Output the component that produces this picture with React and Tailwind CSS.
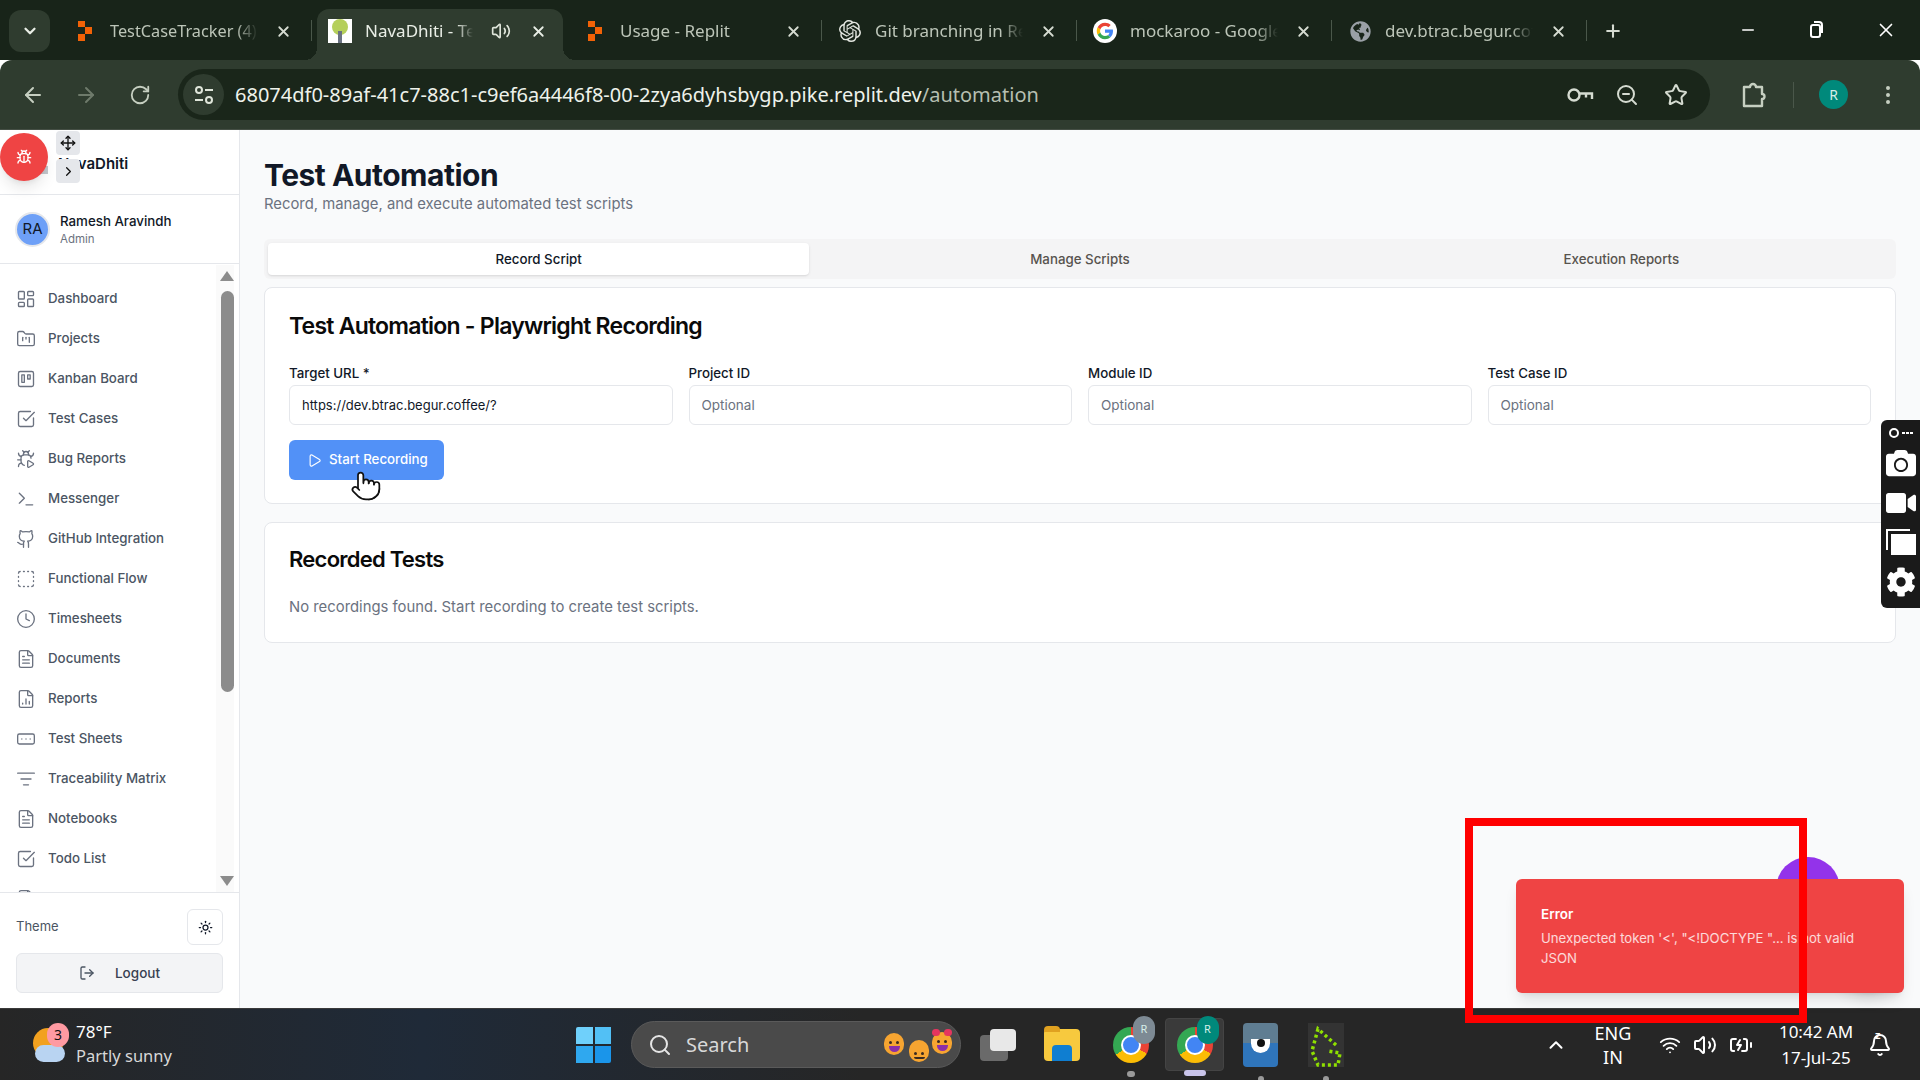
import {
  ArrowLeft, ArrowRight, RotateCw, ZoomOut, Star, EllipsisVertical,
  X, Plus, Minus, ChevronDown, ChevronUp, ChevronRight, Volume2, Move, Bug, BugPlay, LayoutDashboard, FolderKanban,
  Trello, SquareCheckBig, Terminal, Github, SquareDashed, Clock, FileText, FileChartColumn,
  RectangleEllipsis, ListFilter, Sun, LogOut, Play, Search, Wifi, Bell, Pointer, BatteryCharging,
} from "lucide-react";
import { FaCamera, FaVideo, FaCog, FaGlobeAmericas } from "react-icons/fa";
import { SiOpenai } from "react-icons/si";

const navItems = [
  { label: "Dashboard", icon: LayoutDashboard },
  { label: "Projects", icon: FolderKanban },
  { label: "Kanban Board", icon: Trello },
  { label: "Test Cases", icon: SquareCheckBig },
  { label: "Bug Reports", icon: BugPlay },
  { label: "Messenger", icon: Terminal },
  { label: "GitHub Integration", icon: Github },
  { label: "Functional Flow", icon: SquareDashed },
  { label: "Timesheets", icon: Clock },
  { label: "Documents", icon: FileText },
  { label: "Reports", icon: FileChartColumn },
  { label: "Test Sheets", icon: RectangleEllipsis },
  { label: "Traceability Matrix", icon: ListFilter },
  { label: "Notebooks", icon: FileText },
  { label: "Todo List", icon: SquareCheckBig },
  { label: "Settings", icon: FileText },
];

const ReplitIcon = () => (
  <svg width="20" height="22" viewBox="0 0 20 22" fill="#f26207">
    <path d="M3 1h7v6H3zM10 7h7v7h-7zM3 14h7v7H3z" />
  </svg>
);

const NavaIcon = () => (
  <div className="w-6 h-6 bg-white flex flex-col items-center justify-end overflow-hidden relative">
    <div className="absolute top-0 left-1 w-4 h-4 rounded-full bg-[#b5cf5b]" />
    <div className="w-1 h-3 bg-gray-500 relative" />
  </div>
);

const GoogleIcon = () => (
  <svg width="24" height="24" viewBox="0 0 48 48">
    <circle cx="24" cy="24" r="24" fill="#fff" />
    <path fill="#ea4335" d="M24 14c2.7 0 5 1 6.800 2.600l4.600-4.600C32.400 9.300 28.500 7.500 24 7.500c-6.500 0-12 3.700-14.700 9.100l5.400 4.200C16 17 19.700 14 24 14z" />
    <path fill="#4285f4" d="M40 24.500c0-1.200-.1-2.300-.3-3.300H24v6.400h9c-.4 2-1.600 3.800-3.300 5l5.200 4c3-2.800 5.100-7 5.100-12.100z" />
    <path fill="#fbbc05" d="M14.700 27.200A10 10 0 0 1 14.200 24c0-1.100.2-2.200.5-3.200l-5.400-4.200A16.500 16.500 0 0 0 7.500 24c0 2.700.6 5.200 1.800 7.400z" />
    <path fill="#34a853" d="M24 40.500c4.500 0 8.200-1.500 10.900-4l-5.200-4c-1.500 1-3.400 1.600-5.700 1.600-4.300 0-8-2.900-9.300-6.900l-5.400 4.200c2.700 5.400 8.200 9.100 14.700 9.100z" />
  </svg>
);

const browserTabs = [
  { title: "TestCaseTracker (4)", icon: <ReplitIcon />, narrow: true },
  { title: "NavaDhiti - Test Automation", icon: <NavaIcon />, active: true },
  { title: "Usage - Replit", icon: <ReplitIcon /> },
  { title: "Git branching in Replit", icon: <SiOpenai size={22} className="text-[#e3e6e0]" /> },
  { title: "mockaroo - Google Search", icon: <GoogleIcon /> },
  { title: "dev.btrac.begur.coffee", icon: <FaGlobeAmericas size={21} className="text-[#9aa0a6]" /> },
];

const BrowserTab = ({ tab }) => (
  <div
    className={`relative h-full flex items-center pl-[11px] pb-[7px] shrink-0 ${
      tab.active ? "bg-[#2f3c2f] rounded-t-xl text-[#e9eee6] w-[246px] mr-[9px]" : "w-[255px] text-[#bcc5b8]"
    }`}
  >
    <div className="w-6 h-6 flex items-center justify-center shrink-0">{tab.icon}</div>
    <span
      className={`ml-[13px] whitespace-nowrap overflow-hidden [mask-image:linear-gradient(to_right,black_85%,transparent)] ${
        tab.narrow ? "text-[16.300px]" : "text-[17px]"
      } ${tab.active ? "w-[108px]" : "w-[148px]"}`}
    >
      {tab.title}
    </span>
    {tab.active && <Volume2 size={20} className="ml-[18px] text-[#dfe5da]" />}
    <X size={17} strokeWidth={2.5} className={`absolute left-[213px] ${tab.active ? "text-[#e9eee6]" : "text-[#d5dbd1]"}`} />
    {!tab.active && <div className="absolute right-[5px] top-[11px] h-[21px] w-px bg-[#4a574a]" />}
    {tab.active && (
      <>
        <div className="absolute -left-3 bottom-0 w-3 h-3 bg-[radial-gradient(circle_at_0_0,transparent_12px,#2f3c2f_12px)]" />
        <div className="absolute -right-3 bottom-0 w-3 h-3 bg-[radial-gradient(circle_at_100%_0,transparent_12px,#2f3c2f_12px)]" />
      </>
    )}
  </div>
);

const BrowserChrome = () => (
  <div className="shrink-0 font-['Noto_Sans',sans-serif]">
    <div className="h-[60px] bg-[#182419] flex pt-[9px] pl-[9px]">
      <div className="w-[41px] h-[42px] rounded-xl bg-[#2f3c2f] flex items-center justify-center mt-px mr-3">
        <ChevronDown size={18} strokeWidth={3} className="text-[#e9eee6]" />
      </div>
      <div className="flex h-[51px]">
        {browserTabs.map((tab) => (
          <BrowserTab key={tab.title} tab={tab} />
        ))}
      </div>
      <Plus size={20} strokeWidth={2.5} className="text-[#d5dbd1] mt-[12px] ml-[11px]" />
      <div className="ml-auto flex text-white">
        <Minus size={18} className="mt-[12px] mr-[50px]" />
        <svg width="18" height="18" viewBox="0 0 18 18" fill="none" stroke="white" strokeWidth="2" className="mt-[12px] mr-[50px]">
          <rect x="4" y="4" width="9" height="12" rx="2" />
          <path d="M7 1h5a3 3 0 0 1 3 3v8" />
        </svg>
        <X size={22} strokeWidth={1.8} className="mt-[10px] mr-[23px]" />
      </div>
    </div>
    <div className="h-[70px] bg-[#2f3c2f] rounded-t-xl flex items-center pl-[21px] border-b border-[#454f45]">
      <ArrowLeft size={24} className="text-[#c6cfc1]" />
      <ArrowRight size={24} className="text-[#6e7a6b] ml-[29px]" />
      <RotateCw size={22} className="text-[#c6cfc1] ml-[31px]" />
      <div className="ml-[27px] w-[1532px] h-[51px] rounded-full bg-[#1a261a] flex items-center pl-[5px] pr-[22px]">
        <div className="w-[41px] h-[41px] rounded-full bg-[#2f3c2f] flex items-center justify-center">
          <svg width="20" height="20" viewBox="0 0 20 20" fill="none" stroke="#dfe5da" strokeWidth="2">
            <circle cx="5" cy="5" r="3" />
            <path d="M11 5h8M1 15h8" />
            <circle cx="15" cy="15" r="3" />
          </svg>
        </div>
        <span className="ml-[11px] text-[20px] text-[#eef2eb] whitespace-nowrap">
          68074df0-89af-41c7-88c1-c9ef6a4446f8-00-2zya6dyhsbygp.pike.replit.dev<span className="text-[#b6bfb1]">/automation</span>
        </span>
        <div className="ml-auto flex items-center gap-[25px] text-[#d5dbd1]">
          <svg width="27" height="20" viewBox="0 0 27 20" fill="none" stroke="currentColor" strokeWidth="2.400" className="translate-x-[4px]">
            <circle cx="7" cy="10" r="5.500" />
            <path d="M12.500 8.500H25v5.500M19 8.500v4" />
          </svg>
          <ZoomOut size={24} />
          <Star size={24} />
        </div>
      </div>
      <svg width="26" height="28" viewBox="0 0 26 28" fill="none" stroke="#c6cfc1" strokeWidth="2.400" className="ml-[31px]">
        <path d="M3 6h6a3 3 0 0 1 6 0h6v7a2.500 2.500 0 0 1 0 5v7H3z" strokeLinejoin="round" />
      </svg>
      <div className="w-px h-[26px] bg-[#4a574a] ml-[26px]" />
      <div className="w-[29px] h-[29px] rounded-full bg-[#00897b] text-[#d6eee9] text-sm flex items-center justify-center ml-[25px]">R</div>
      <EllipsisVertical size={24} className="text-[#c6cfc1] ml-[28px]" />
    </div>
  </div>
);

const Sidebar = () => (
  <aside className="relative w-[240px] shrink-0 h-full bg-white border-r border-[#e5e7eb] flex flex-col">
    <div className="h-[65px] shrink-0 border-b border-[#e5e7eb] flex items-center pl-[58px] pt-[4px]">
      <div className="absolute left-[36px] top-[36px] w-[12px] h-[8px] bg-[#c4c7cc]" />
      <span className="text-[15px] font-semibold text-[#111827]">NavaDhiti</span>
    </div>
    <div className="h-[69px] shrink-0 border-b border-[#e5e7eb] flex items-center pl-[15px]">
      <div className="w-[35px] h-[35px] rounded-full bg-[#6ea0f7] border-2 border-[#e5e7eb] flex items-center justify-center text-[15px] text-[#111827]">
        RA
      </div>
      <div className="ml-[10px] pt-[2px]">
        <div className="text-[13.300px] leading-[18px] font-medium text-[#111827]">Ramesh Aravindh</div>
        <div className="text-[11.500px] leading-[18px] text-[#6b7280]">Admin</div>
      </div>
    </div>
    <nav className="flex-1 overflow-hidden pt-[15px]">
      {navItems.map(({ label, icon: Icon }) => (
        <div key={label} className="h-10 flex items-center pl-4 text-[13.300px] font-medium text-[#4b5563] whitespace-nowrap">
          <Icon size={20} strokeWidth={1.6} className="text-[#6b7280] shrink-0" />
          <span className="ml-3">{label}</span>
        </div>
      ))}
    </nav>
    <div className="shrink-0 border-t border-[#e5e7eb] h-[116px] px-4 pt-[16px]">
      <div className="flex items-center justify-between">
        <span className="text-[13px] text-[#4b5563]">Theme</span>
        <div className="w-[36px] h-[36px] rounded-md border border-[#e5e7eb] bg-white flex items-center justify-center">
          <Sun size={15} className="text-[#111827]" />
        </div>
      </div>
      <div className="mt-[8px] h-[40px] rounded-md border border-[#e5e7eb] bg-[#f3f4f6] flex items-center justify-center text-[13.500px] font-medium text-[#374151]">
        <LogOut size={16} className="mr-[20px] text-[#4b5563]" />
        Logout
      </div>
    </div>

    {/* scrollbar, drawn because the headless browser hides native ones */}
    <div className="absolute left-[216px] top-[135px] bottom-[116px] w-[18px] bg-[#fafafa]">
      <div className="absolute left-[4px] top-[6px] w-0 h-0 border-x-[7px] border-x-transparent border-b-[10px] border-b-[#8c8c8c]" />
      <div className="absolute left-[5px] top-[26px] w-[13px] h-[401px] rounded-full bg-[#8c8c8c]" />
      <div className="absolute left-[4px] bottom-[6px] w-0 h-0 border-x-[7px] border-x-transparent border-t-[10px] border-t-[#8c8c8c]" />
    </div>
  </aside>
);

const Field = ({ label, placeholder, value }) => (
  <div>
    <label className="block text-[13.300px] leading-[20px] font-medium text-[#111827] mb-[2px]">{label}</label>
    <input
      readOnly
      value={value}
      placeholder={placeholder}
      className="w-full h-10 rounded-md border border-[#e5e7eb] bg-white px-3 text-[13px] text-[#111827] placeholder:text-[13.500px] placeholder:text-[#6b7280] outline-none"
    />
  </div>
);

const Card = ({ children, className = "" }) => (
  <div className={`bg-white rounded-lg border border-[#e5e7eb] ${className}`}>{children}</div>
);

const MainContent = () => (
  <main className="flex-1 min-w-0 h-full bg-[#f9fafb] px-6 pt-[27px]">
    <h1 className="text-[30px] leading-[36px] font-bold tracking-[-0.5px] text-[#111827]">Test Automation</h1>
    <p className="mt-px text-[14.850px] leading-[20px] text-[#6b7280]">Record, manage, and execute automated test scripts</p>

    <div className="mt-[25px] h-10 p-1 rounded-md bg-[#f4f4f5] grid grid-cols-3 text-[13.300px] font-medium text-[#57534e]">
      <div className="rounded-sm bg-white shadow-sm text-[#111827] flex items-center justify-center pt-px">Record Script</div>
      <div className="flex items-center justify-center pt-px">Manage Scripts</div>
      <div className="flex items-center justify-center pt-px">Execution Reports</div>
    </div>

    <Card className="mt-2 px-6 pt-[22px] h-[217px]">
      <h2 className="text-[23px] leading-[32px] font-semibold tracking-[-0.77px] text-[#0a0a0a]">Test Automation - Playwright Recording</h2>
      <div className="grid grid-cols-4 gap-4 mt-[21px]">
        <Field label="Target URL *" value="https://dev.btrac.begur.coffee/?" />
        <Field label="Project ID" placeholder="Optional" value="" />
        <Field label="Module ID" placeholder="Optional" value="" />
        <Field label="Test Case ID" placeholder="Optional" value="" />
      </div>
      <div className="relative mt-[15px] w-[155px] h-10 rounded-md bg-[#5291f7] flex items-center pl-[18px] text-[13.300px] font-medium text-white">
        <Play size={15} strokeWidth={1.8} />
        <span className="ml-[7px]">Start Recording</span>
        <Pointer size={32} strokeWidth={1.3} className="absolute left-[61px] top-[30px] fill-white text-[#111]" />
      </div>
    </Card>

    <Card className="mt-[18px] px-6 pt-[20px] h-[121px]">
      <h2 className="text-[22px] leading-[32px] font-semibold tracking-[-0.75px] text-[#0a0a0a]">Recorded Tests</h2>
      <p className="mt-[20px] text-[14.850px] leading-[24px] text-[#6b7280]">No recordings found. Start recording to create test scripts.</p>
    </Card>
  </main>
);

const Overlays = () => (
  <>
    {/* floating bug reporter widget */}
    <div className="absolute left-0 top-[133px] w-[48px] h-[48px] rounded-full bg-[#ef4444] shadow-lg flex items-center justify-center">
      <Bug size={16} className="text-white" />
    </div>
    <div className="absolute left-[56px] top-[131px] w-6 h-6 rounded bg-[#e5e7eb] flex items-center justify-center">
      <Move size={16} className="text-[#111]" />
    </div>
    <div className="absolute left-[56px] top-[159px] w-6 h-6 rounded bg-[#e5e7eb] flex items-center justify-center">
      <ChevronRight size={15} className="text-[#111]" />
    </div>

    {/* screen-capture extension toolbar */}
    <div className="absolute right-0 top-[420px] w-[39px] h-[188px] rounded-l-md bg-[#1a1a1a] flex flex-col items-center pt-[6px] text-white">
      <div className="h-[14px] flex items-center gap-[3px]">
        <div className="w-[10px] h-[10px] rounded-full border-2 border-white" />
        <div className="flex gap-px">
          <div className="w-[3px] h-[2px] bg-white" />
          <div className="w-[3px] h-[2px] bg-white" />
          <div className="w-[3px] h-[2px] bg-white" />
        </div>
      </div>
      <FaCamera size={30} className="mt-[8px]" />
      <FaVideo size={30} className="mt-[10px]" />
      <svg width="30" height="26" viewBox="0 0 30 26" className="mt-[11px]" fill="white">
        <path d="M0 0h24v2H2v19H0z" />
        <path d="M4 4h26v22H4z" />
        <path d="M4 4h26v1H5v21H4z" fill="#1a1a1a" />
      </svg>
      <FaCog size={30} className="mt-[12px]" />
    </div>

    {/* purple assistant button behind the toast */}
    <div className="absolute left-[1776px] top-[857px] w-16 h-16 rounded-full bg-[#9333ea]" />
    <div className="absolute left-[1836px] top-[928px] w-16 h-16 rounded-full bg-[#f9fafb] shadow-lg" />

    {/* error toast */}
    <div className="absolute left-[1516px] top-[879px] w-[388px] h-[114px] rounded-md bg-[#ef4444] shadow-lg pl-[25px] pr-8 pt-[25px] text-white">
      <div className="text-[13.500px] leading-[20px] font-semibold">Error</div>
      <div className="mt-[4px] text-[13.200px] leading-[20px] text-white/80">
        Unexpected token '&lt;', "&lt;!DOCTYPE "... is not valid JSON
      </div>
    </div>

    {/* red annotation frame from the screenshot */}
    <div className="absolute left-[1465px] top-[818px] w-[342px] h-[205px] border-[8px] border-[#ff0000] pointer-events-none" />
  </>
);

const Emoji = ({ className, mouth }) => (
  <span className={`absolute w-[20px] h-[22px] rounded-full bg-[#f7a531] flex flex-col items-center justify-end pb-[3px] ${className}`}>
    <span className="flex gap-[4px] mb-[2px]">
      <span className="w-[3px] h-[3px] rounded-full bg-[#3a2a20]" />
      <span className="w-[3px] h-[3px] rounded-full bg-[#3a2a20]" />
    </span>
    <span className={`w-[11px] rounded-b-full ${mouth}`} />
  </span>
);

const Taskbar = () => (
  <div className="h-[72px] shrink-0 bg-[linear-gradient(90deg,#262626_0%,#1f2a38_22%,#262626_45%)] border-t border-[#3a3a3a] flex items-center relative font-['Noto_Sans',sans-serif] text-white">
    {/* weather */}
    <div className="relative w-[44px] h-[44px] ml-[30px] shrink-0">
      <div className="absolute left-[3px] top-[5px] w-[30px] h-[30px] rounded-full bg-[#f2a11f]" />
      <div className="absolute left-[5px] top-[22px] w-[30px] h-[17px] rounded-full bg-[#b9d4f2]" />
      <div className="absolute left-[17px] top-0 w-[22px] h-[24px] rounded-full bg-[#ff9aa2] text-[#111] text-[14px] flex items-center justify-center">3</div>
    </div>
    <div className="ml-[2px] leading-[24px] w-[500px] shrink-0 -mt-[2px]">
      <div className="text-[17px]">78°F</div>
      <div className="text-[16.500px] text-[#d8d8d8]">Partly sunny</div>
    </div>

    {/* windows logo */}
    <div className="grid grid-cols-2 gap-[2px] w-[35px] h-[36px] shrink-0">
      <div className="bg-[#6fd0fb] rounded-tl-[2px]" />
      <div className="bg-[#52c0f5]" />
      <div className="bg-[#2fa8ef]" />
      <div className="bg-[#1a95ea] rounded-br-[2px]" />
    </div>

    {/* search */}
    <div className="ml-[20px] w-[330px] h-[47px] rounded-full bg-[#4a4a4a] border border-[#5a5a5a] flex items-center pl-[16px] relative shrink-0">
      <Search size={24} className="text-[#e5e5e5]" />
      <span className="ml-[14px] text-[20px] text-[#d8d8d8]">Search</span>
      <Emoji className="left-[252px] top-[11px]" mouth="h-[6px] bg-[#8b2fa8]" />
      <Emoji className="left-[277px] top-[18px]" mouth="h-[2px] bg-[#3a2a20]" />
      <Emoji className="left-[300px] top-[10px]" mouth="h-[6px] bg-[#8b2fa8]" />
      <span className="absolute left-[300px] top-[7px] w-[8px] h-[7px] rounded-full bg-[#e5355f]" />
      <span className="absolute left-[312px] top-[7px] w-[8px] h-[7px] rounded-full bg-[#e5355f]" />
    </div>

    {/* pinned apps */}
    <div className="ml-[19px] flex items-center h-full shrink-0">
      <div className="relative w-[37px] h-[36px] mr-[27px]">
        <div className="absolute left-0 top-[8px] w-[28px] h-[26px] rounded bg-[#6a6a6a]" />
        <div className="absolute left-[10px] top-[2px] w-[26px] h-[22px] rounded bg-[#e8e8e8]" />
      </div>
      <div className="relative w-[36px] h-[32px] mr-[33px]">
        <div className="absolute inset-0 rounded bg-[#f7c93e]" />
        <div className="absolute left-0 -top-[3px] w-[16px] h-[6px] rounded-t bg-[#e0a120]" />
        <div className="absolute left-[8px] bottom-0 w-[20px] h-[16px] rounded-t bg-[#0f7ed1]" />
      </div>
      <ChromeProfile letter="R" badge="#7d8a94" dot="bg-[#9a9a9a]" />
      <div className="relative ml-[16px] mr-[13px] w-[59px] h-[53px] rounded bg-[#3a3a3a] border border-[#444] flex items-center justify-center">
        <ChromeProfile letter="R" badge="#00897b" dot="bg-[#c9c4ea] w-[22px] rounded-full" inner />
      </div>
      <div className="relative w-[35px] h-[44px] ml-[6px]">
        <div className="absolute inset-x-0 top-0 h-[20px] rounded-t bg-[#5f7d92]" />
        <div className="absolute inset-x-0 top-[20px] h-[24px] rounded-b bg-[#2f75bb]" />
        <div className="absolute left-[8px] top-[16px] w-[19px] h-[14px] rounded-b-full bg-white flex justify-center">
          <div className="w-[8px] h-[8px] rounded-full bg-[#111]" />
        </div>
        <div className="absolute left-[15px] top-[53px] w-[6px] h-[6px] rounded-full bg-[#9a9a9a]" />
      </div>
      <div className="relative w-[36px] h-[44px] ml-[30px] bg-[#333]">
        <svg width="36" height="44" viewBox="0 0 36 44" fill="none" stroke="#8fe000" strokeWidth="3.500" strokeDasharray="3 3">
          <path d="M28 22L10 6 4 28l6 14h20l2-12-12-2" />
        </svg>
        <div className="absolute left-[15px] top-[53px] w-[6px] h-[6px] rounded-full bg-[#9a9a9a]" />
      </div>
    </div>

    {/* system tray */}
    <div className="absolute right-0 top-0 h-full flex items-center">
      <ChevronUp size={22} strokeWidth={2.2} className="mr-[26px]" />
      <div className="text-[18px] leading-[24px] text-center w-[40px] mr-[26px]">
        <div>ENG</div>
        <div>IN</div>
      </div>
      <Wifi size={22} className="mr-[12px]" />
      <Volume2 size={24} className="mr-[12px]" />
      <BatteryCharging size={24} className="mr-[23px]" />
      <div className="text-[17px] leading-[26px] text-center w-[80px] mr-[12px]">
        <div>10:42 AM</div>
        <div>17-Jul-25</div>
      </div>
      <div className="relative mr-[28px]">
        <Bell size={24} />
        <span className="absolute -top-[6px] left-[7px] text-[11px] font-bold">z</span>
      </div>
    </div>
  </div>
);

const ChromeProfile = ({ letter, badge, dot, inner }) => (
  <div className="relative w-[36px] h-[36px]">
    <div className="w-[36px] h-[36px] rounded-full bg-[conic-gradient(#ea4335_0_33%,#fbbc05_33%_66%,#34a853_66%_100%)] flex items-center justify-center">
      <div className="w-[16px] h-[16px] rounded-full bg-[#4285f4] border-2 border-white box-content" />
    </div>
    <div
      className="absolute left-[20px] -top-[11px] w-[22px] h-[28px] rounded-full text-[#d6eee9] text-[11px] flex items-center justify-center"
      style={{ backgroundColor: badge }}
    >
      {letter}
    </div>
    <div className={`absolute left-1/2 -translate-x-1/2 ${inner ? "top-[43px]" : "top-[44px]"} w-[8px] h-[6px] rounded-full ${dot}`} />
  </div>
);

const App = () => (
  <div className="relative w-[1920px] h-[1080px] overflow-hidden flex flex-col font-['Inter',sans-serif]">
    <BrowserChrome />
    <div className="flex-1 min-h-0 flex">
      <Sidebar />
      <MainContent />
    </div>
    <Taskbar />
    <Overlays />
  </div>
);

export default App;
